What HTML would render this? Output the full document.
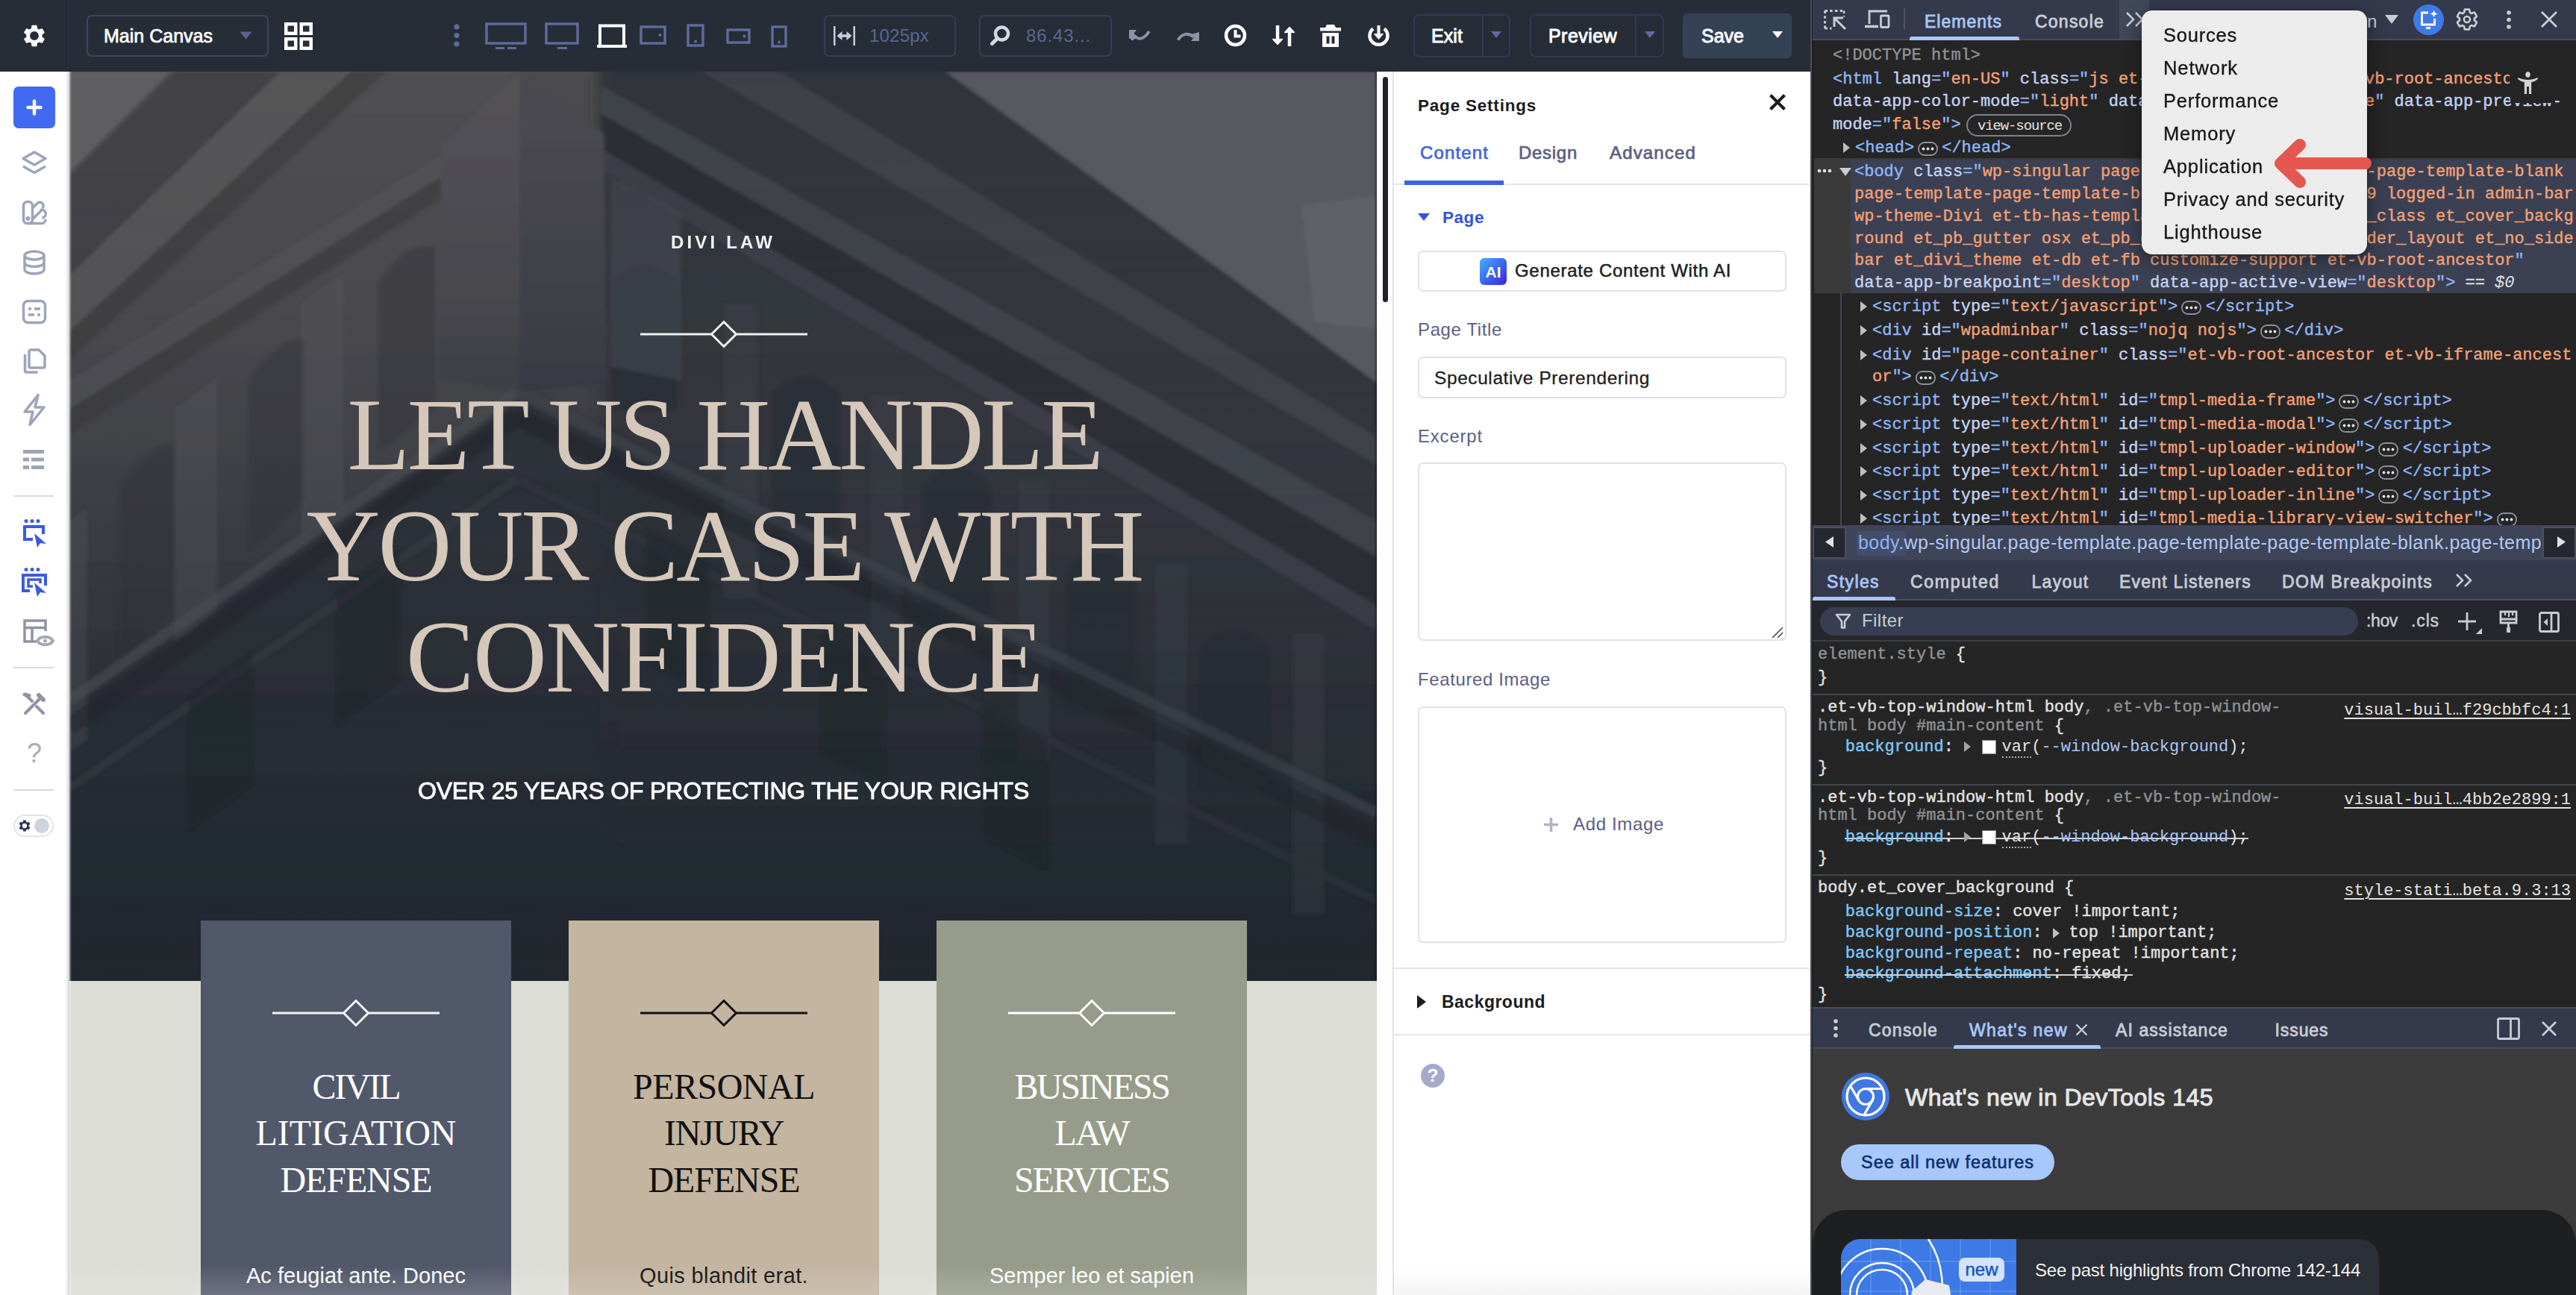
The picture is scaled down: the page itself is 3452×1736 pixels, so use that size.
<!DOCTYPE html><html lang="en"><head><meta charset="utf-8"><title>Divi Page Settings</title><style>html,body{margin:0;padding:0}body{width:3452px;height:1736px;position:relative;overflow:hidden;background:#fff}div,span,svg{position:absolute;box-sizing:border-box}.t{white-space:pre;display:block}span span{position:static}svg *{position:static}</style></head><body>
<div style="left:93px;top:96px;width:1752px;height:1640px;background:#dcddd5;"></div>
<svg style="left:93px;top:96px" width="1752" height="1219" viewBox="0 0 1860 1294" preserveAspectRatio="none">
<defs>
<linearGradient id="hg" x1="0" y1="0" x2="0" y2="1"><stop offset="0" stop-color="#4b4b4e"/><stop offset="0.250" stop-color="#46464a"/><stop offset="0.460" stop-color="#3a3b42"/><stop offset="0.700" stop-color="#2a2e37"/><stop offset="0.850" stop-color="#232a32"/><stop offset="1" stop-color="#1f262e"/></linearGradient>
<linearGradient id="fadeR" x1="0" y1="0" x2="0" y2="1"><stop offset="0" stop-color="#2c2f37" stop-opacity="0.900"/><stop offset="0.550" stop-color="#2b2e37" stop-opacity="0.550"/><stop offset="1" stop-color="#242a33" stop-opacity="0"/></linearGradient>
<linearGradient id="fadeL" x1="0" y1="0" x2="0" y2="1"><stop offset="0" stop-color="#58585a" stop-opacity="0.350"/><stop offset="0.600" stop-color="#505054" stop-opacity="0.220"/><stop offset="1" stop-color="#404048" stop-opacity="0"/></linearGradient>
<linearGradient id="pil" x1="0" y1="0" x2="0" y2="1"><stop offset="0" stop-color="#545357"/><stop offset="0.700" stop-color="#48484e"/><stop offset="1" stop-color="#3d3e46"/></linearGradient>
<linearGradient id="pil2" x1="0" y1="0" x2="0" y2="1"><stop offset="0" stop-color="#4b4b51"/><stop offset="0.700" stop-color="#404149"/><stop offset="1" stop-color="#373943"/></linearGradient>
<linearGradient id="low" x1="0" y1="0" x2="0" y2="1"><stop offset="0" stop-color="#2a2f37" stop-opacity="0.900"/><stop offset="1" stop-color="#20272f" stop-opacity="0"/></linearGradient>
<filter id="bl" x="-5%" y="-5%" width="110%" height="110%"><feGaussianBlur stdDeviation="2.500"/></filter>
<filter id="bl2" x="-5%" y="-5%" width="110%" height="110%"><feGaussianBlur stdDeviation="10"/></filter>
</defs>
<rect width="1860" height="1294" fill="url(#hg)"/>
<g filter="url(#bl2)">
<polygon points="-100,-100 640,-100 640,460 -100,970" fill="url(#fadeL)"/>
<polygon points="755,-100 1960,-100 1960,1100 755,1100" fill="url(#fadeR)"/>
<polygon points="-100,970 640,460 1960,1110 1960,1450 -100,1450" fill="url(#low)"/>
</g>
<g filter="url(#bl)">
<polygon points="0,0 143,0 0,143" fill="#5e5e62"/>
<polygon points="1246,0 1860,0 1860,443" fill="#585961"/>
<polygon points="1753,190 1860,177 1860,366 1772,356" fill="#616168"/>
<!-- left cornice bands -->
<polygon points="0,150 150,0 300,0 0,290" fill="#38383c" opacity="0.450"/>
<polygon points="0,290 300,0 400,0 0,370" fill="#5e5e60" opacity="0.400"/>
<polygon points="0,370 400,0 450,0 0,410" fill="#333337" opacity="0.450"/>
<polygon points="0,440 528,120 528,150 0,480" fill="#5a5a5d" opacity="0.400"/>
<polygon points="0,480 528,150 528,180 0,515" fill="#303034" opacity="0.450"/>
<!-- left arcade windows -->
<g fill="#303035" opacity="0.400">
<path d="M440,300 q40,-60 80,-50 v230 l-80,60z"/><path d="M255,440 q40,-60 80,-60 v230 l-80,70z"/><path d="M70,590 q40,-60 80,-60 v230 l-80,70z"/>
</g>
<g fill="#5c5c60" opacity="0.300">
<path d="M330,330 l60,-45 v330 l-60,45z"/><path d="M150,480 l60,-45 v330 l-60,45z"/><path d="M0,640 l25,-20 v330 l-25,20z"/>
</g>
<!-- right cornice -->
<polygon points="757,0 1246,0 1860,443 1860,640 757,20" fill="#30323b" opacity="0.450"/>
<polygon points="900,0 1010,0 1860,520 1860,560" fill="#5a5b63" opacity="0.350"/>
<polygon points="757,20 1860,640 1860,690 757,60" fill="#4c4e57" opacity="0.550"/>
<polygon points="757,60 1860,690 1860,760 757,110" fill="#262932" opacity="0.550"/>
<polygon points="757,110 1860,760 1860,795 757,140" fill="#454751" opacity="0.500"/>
<!-- right arcade windows -->
<g fill="#252831" opacity="0.500">
<path d="M770,300 q45,-50 95,0 v180 h-95z"/><path d="M1000,460 q45,-50 95,0 v200 h-95z"/><path d="M1215,590 q45,-50 95,0 v200 h-95z"/><path d="M1420,710 q45,-50 95,0 v200 h-95z"/><path d="M1610,820 q45,-50 95,0 v200 h-95z"/>
</g>
<g fill="#474952" opacity="0.220">
<rect x="930" y="330" width="50" height="420"/><rect x="1140" y="460" width="45" height="400"/><rect x="1350" y="580" width="45" height="400"/><rect x="1545" y="700" width="45" height="400"/><rect x="1740" y="800" width="45" height="400"/>
</g>
<polygon points="770,150 870,200 870,440 770,420" fill="#4a4f5a" opacity="0.450"/>
<!-- pillar -->
<polygon points="530,105 640,2 640,456 524,436" fill="url(#pil)"/>
<polygon points="640,2 760,88 764,444 640,456" fill="url(#pil2)"/>
<!-- chevron ledges -->
<g fill="none">
<path d="M636,456 L0,895" stroke="#4d4e54" stroke-width="16" opacity="0.600"/>
<path d="M636,456 L1860,1055" stroke="#40434c" stroke-width="16" opacity="0.600"/>
<path d="M636,490 L0,932" stroke="#24262d" stroke-width="26" opacity="0.500"/>
<path d="M636,490 L1860,1092" stroke="#20232b" stroke-width="26" opacity="0.500"/>
<path d="M636,580 L0,1020" stroke="#3c3e46" stroke-width="12" opacity="0.450"/>
<path d="M636,580 L1860,1180" stroke="#343741" stroke-width="12" opacity="0.450"/>
</g>
<g fill="#1f222a" opacity="0.400">
<path d="M380,740 l90,-65 v190 l-90,65z"/><path d="M170,890 l90,-65 v190 l-90,65z"/><path d="M820,650 l90,45 v190 l-90,-45z"/><path d="M1070,780 l90,45 v190 l-90,-45z"/><path d="M1300,900 l90,45 v190 l-90,-45z"/>
</g>
</g>
</svg>
<div style="left:93px;top:96px;width:3px;height:1640px;background:linear-gradient(90deg,rgba(255,255,255,.55),rgba(255,255,255,0))"></div>
<span id="t1" class="t" style="top:311.3px;font:700 24px/28.8px 'Liberation Sans',sans-serif;color:#f2f2f2;letter-spacing:4.17px;left:969px;transform:translateX(-50%);">DIVI LAW</span>
<svg style="left:856.5px;top:428.5px" width="226" height="38" viewBox="-113 -19 226 38" fill="none" stroke="#f0f0f0" stroke-width="3"><path d="M-112 0H-17M17 0H112"/><path d="M0 -16.500L16.500 0 0 16.500-16.500 0z"/></svg>
<span id="t2" class="t" style="top:500.6px;font:400 137px/164.4px 'Liberation Serif',serif;color:#d5c7b9;letter-spacing:-3.49px;left:970.5px;transform:translateX(-50%);">LET US HANDLE</span>
<span id="t3" class="t" style="top:649.6px;font:400 137px/164.4px 'Liberation Serif',serif;color:#d5c7b9;letter-spacing:-3.00px;left:970.5px;transform:translateX(-50%);">YOUR CASE WITH</span>
<span id="t4" class="t" style="top:798.6px;font:400 137px/164.4px 'Liberation Serif',serif;color:#d5c7b9;letter-spacing:-1.47px;left:970.5px;transform:translateX(-50%);">CONFIDENCE</span>
<span id="t5" class="t" style="top:1041.2px;font:400 32px/38.4px 'Liberation Sans',sans-serif;color:#fff;letter-spacing:-0.18px;left:969.5px;transform:translateX(-50%);-webkit-text-stroke:0.900px #fff;">OVER 25 YEARS OF PROTECTING THE YOUR RIGHTS</span>
<div style="left:269px;top:1234px;width:416px;height:502px;background:#51586a;"></div>
<svg style="left:364px;top:1338.5px" width="226" height="38" viewBox="-113 -19 226 38" fill="none" stroke="#f4f4f4" stroke-width="3"><path d="M-112 0H-17M17 0H112"/><path d="M0 -16.500L16.500 0 0 16.500-16.500 0z"/></svg>
<span id="t6" class="t" style="top:1427.5px;font:400 48px/57.6px 'Liberation Serif',serif;color:#fff;letter-spacing:-2.20px;left:477px;transform:translateX(-50%);">CIVIL</span>
<span id="t7" class="t" style="top:1490.0px;font:400 48px/57.6px 'Liberation Serif',serif;color:#fff;letter-spacing:-0.03px;left:477px;transform:translateX(-50%);">LITIGATION</span>
<span id="t8" class="t" style="top:1552.5px;font:400 48px/57.6px 'Liberation Serif',serif;color:#fff;letter-spacing:-1.10px;left:477px;transform:translateX(-50%);">DEFENSE</span>
<span id="t9" class="t" style="top:1693.1px;font:400 29px/34.8px 'Liberation Sans',sans-serif;color:#fff;letter-spacing:0.03px;left:477px;transform:translateX(-50%);">Ac feugiat ante. Donec</span>
<div style="left:762px;top:1234px;width:416px;height:502px;background:#c3b5a0;"></div>
<svg style="left:857px;top:1338.5px" width="226" height="38" viewBox="-113 -19 226 38" fill="none" stroke="#111" stroke-width="3"><path d="M-112 0H-17M17 0H112"/><path d="M0 -16.500L16.500 0 0 16.500-16.500 0z"/></svg>
<span id="t10" class="t" style="top:1427.5px;font:400 48px/57.6px 'Liberation Serif',serif;color:#111;letter-spacing:-0.51px;left:970px;transform:translateX(-50%);">PERSONAL</span>
<span id="t11" class="t" style="top:1490.0px;font:400 48px/57.6px 'Liberation Serif',serif;color:#111;letter-spacing:-1.34px;left:970px;transform:translateX(-50%);">INJURY</span>
<span id="t12" class="t" style="top:1552.5px;font:400 48px/57.6px 'Liberation Serif',serif;color:#111;letter-spacing:-1.10px;left:970px;transform:translateX(-50%);">DEFENSE</span>
<span id="t13" class="t" style="top:1693.1px;font:400 29px/34.8px 'Liberation Sans',sans-serif;color:#111;letter-spacing:0.38px;left:970px;transform:translateX(-50%);">Quis blandit erat.</span>
<div style="left:1255px;top:1234px;width:416px;height:502px;background:#979c8a;"></div>
<svg style="left:1350px;top:1338.5px" width="226" height="38" viewBox="-113 -19 226 38" fill="none" stroke="#fff" stroke-width="3"><path d="M-112 0H-17M17 0H112"/><path d="M0 -16.500L16.500 0 0 16.500-16.500 0z"/></svg>
<span id="t14" class="t" style="top:1427.5px;font:400 48px/57.6px 'Liberation Serif',serif;color:#fff;letter-spacing:-2.47px;left:1463px;transform:translateX(-50%);">BUSINESS</span>
<span id="t15" class="t" style="top:1490.0px;font:400 48px/57.6px 'Liberation Serif',serif;color:#fff;letter-spacing:-2.15px;left:1463px;transform:translateX(-50%);">LAW</span>
<span id="t16" class="t" style="top:1552.5px;font:400 48px/57.6px 'Liberation Serif',serif;color:#fff;letter-spacing:-1.86px;left:1463px;transform:translateX(-50%);">SERVICES</span>
<span id="t17" class="t" style="top:1693.1px;font:400 29px/34.8px 'Liberation Sans',sans-serif;color:#fff;left:1463px;transform:translateX(-50%);">Semper leo et sapien</span>
<div style="left:93px;top:1696px;width:1752px;height:40px;background:linear-gradient(180deg,rgba(255,255,255,0),rgba(255,255,255,.16))"></div>
<div style="left:1841px;top:96px;width:4px;height:1218px;background:linear-gradient(90deg,rgba(0,0,0,0),rgba(0,0,0,.3))"></div>
<div style="left:0px;top:0px;width:2427px;height:96px;background:#262d37;"></div>
<div style="left:89px;top:0px;width:4px;height:96px;background:linear-gradient(90deg,#1b2330,#2a3446 50%,#1f2835)"></div>
<svg style="left:29px;top:31px" width="34" height="34" viewBox="0 0 24 24"><path fill="#fff" fill-rule="evenodd" d="M19.4 13c.04-.33.07-.66.07-1s-.03-.67-.07-1l2.1-1.650c.19-.15.24-.42.12-.64l-2-3.460c-.12-.22-.39-.3-.61-.22l-2.490 1c-.52-.4-1.080-.73-1.690-.98l-.38-2.650A.49.49 0 0 0 13.960 2h-4c-.25 0-.46.18-.49.42l-.38 2.650c-.61.25-1.170.59-1.690.98l-2.490-1c-.23-.09-.49 0-.61.22l-2 3.460c-.13.22-.07.49.12.64L4.530 11c-.04.33-.07.660-.07 1s.03.670.07 1l-2.110 1.650c-.19.15-.24.42-.12.64l2 3.460c.12.22.39.3.61.22l2.490-1c.52.4 1.080.73 1.690.98l.38 2.650c.03.24.24.42.49.42h4c.25 0 .46-.18.49-.42l.38-2.650c.61-.25 1.170-.59 1.690-.98l2.490 1c.23.09.49 0 .61-.22l2-3.460c.12-.22.07-.49-.12-.64L19.400 13zM11.960 16.200a4.200 4.200 0 1 1 0-8.400 4.200 4.200 0 0 1 0 8.400z"/></svg>
<div style="left:116px;top:20px;width:244px;height:56px;border:2px solid #3b4661;border-radius:7px"></div>
<span id="t18" class="t" style="top:32.8px;font:400 25px/30.0px 'Liberation Sans',sans-serif;color:#fff;letter-spacing:0.01px;left:139px;-webkit-text-stroke:0.700px #fff;">Main Canvas</span>
<svg style="left:321px;top:42px" width="17" height="11" viewBox="0 0 17 11"><path d="M0.500 0.500h16l-8 10z" fill="#5a6494"/></svg>
<svg style="left:381px;top:30px" width="38" height="37" viewBox="0 0 38 37" fill="none" stroke="#fff" stroke-width="4.500"><rect x="2.250" y="2.250" width="13" height="12.500"/><rect x="22.750" y="2.250" width="13" height="12.500"/><rect x="2.250" y="22.250" width="13" height="12.500"/><rect x="22.750" y="22.250" width="13" height="12.500"/></svg>
<svg style="left:607px;top:31px" width="10" height="34" viewBox="0 0 10 34" fill="#5f6b9c"><circle cx="5" cy="5" r="3.600"/><circle cx="5" cy="16.500" r="3.600"/><circle cx="5" cy="28" r="3.600"/></svg>
<svg style="left:648px;top:28px" width="60" height="40" viewBox="0 0 60 40" fill="none" stroke="#5f6b9c" stroke-width="3.400"><rect x="4" y="4" width="52" height="26"/><path d="M16 36.500h12M32 36.500h12" stroke-width="3"/></svg>
<svg style="left:728px;top:28px" width="50" height="40" viewBox="0 0 50 40" fill="none" stroke="#5f6b9c" stroke-width="3.400"><rect x="4" y="4" width="42" height="26"/><path d="M19 36.500h13" stroke-width="3"/></svg>
<svg style="left:798px;top:30px" width="44" height="36" viewBox="0 0 44 36" fill="none" stroke="#fff" stroke-width="4"><path d="M6 30V4.500h32V30"/><path d="M2 32h40" stroke-width="4"/></svg>
<svg style="left:856px;top:33px" width="38" height="28" viewBox="0 0 38 28" fill="none" stroke="#5f6b9c" stroke-width="3.400"><rect x="3" y="3" width="32" height="22"/><circle cx="28.500" cy="14" r="2" fill="#5f6b9c" stroke="none"/></svg>
<svg style="left:919px;top:31px" width="26" height="33" viewBox="0 0 26 33" fill="none" stroke="#5f6b9c" stroke-width="3.400"><rect x="3" y="3" width="20" height="27"/><circle cx="13" cy="24.500" r="2" fill="#5f6b9c" stroke="none"/></svg>
<svg style="left:972px;top:37px" width="35" height="23" viewBox="0 0 35 23" fill="none" stroke="#5f6b9c" stroke-width="3.400"><rect x="3" y="3" width="29" height="17"/><circle cx="25.500" cy="11.500" r="2" fill="#5f6b9c" stroke="none"/></svg>
<svg style="left:1032px;top:33px" width="24" height="32" viewBox="0 0 24 32" fill="none" stroke="#5f6b9c" stroke-width="3.400"><rect x="3" y="3" width="18" height="26"/><circle cx="12" cy="23.500" r="2" fill="#5f6b9c" stroke="none"/></svg>
<div style="left:1104px;top:20px;width:177px;height:56px;border:2px solid #333e58;border-radius:7px"></div>
<svg style="left:1117px;top:35px" width="29" height="26" viewBox="0 0 29 26" fill="#c9cde0"><rect x="0" y="0" width="2.500" height="26"/><rect x="26.500" y="0" width="2.500" height="26"/><path d="M4.500 13l7-6v4.300h6V7l7 6-7 6v-4.300h-6V19z"/></svg>
<span id="t19" class="t" style="top:33.8px;font:400 24px/28.8px 'Liberation Sans',sans-serif;color:#5b6691;letter-spacing:0.21px;left:1165px;">1025px</span>
<div style="left:1312px;top:20px;width:178px;height:56px;border:2px solid #333e58;border-radius:7px"></div>
<svg style="left:1327px;top:34px" width="27" height="27" viewBox="0 0 27 27" fill="none" stroke="#d5d8e6"><circle cx="15.500" cy="11" r="8.500" stroke-width="4.500"/><path d="M9.500 17.500L2.500 24.500" stroke-width="5" stroke-linecap="round"/></svg>
<span id="t20" class="t" style="top:33.8px;font:400 24px/28.8px 'Liberation Sans',sans-serif;color:#5b6691;letter-spacing:0.87px;left:1375px;">86.43...</span>
<svg style="left:1513px;top:39px" width="30" height="18" viewBox="0 0 30 18" fill="none" stroke="#8b93a8" stroke-width="4"><path d="M6 9c7 6 14 5 21-6"/><path d="M0 1h10l-3.500 5 5 4-7 5.500L0 12z" fill="#8b93a8" stroke="none"/></svg>
<svg style="left:1576px;top:39px" width="31" height="18" viewBox="0 0 31 18" fill="none" stroke="#8b93a8" stroke-width="4"><path d="M2.500 14.500c6-9 14-10 21-4"/><path d="M31 4v12H20l4-5.500-4-3.500z" fill="#8b93a8" stroke="none"/></svg>
<svg style="left:1640px;top:32px" width="31" height="31" viewBox="0 0 31 31" fill="none" stroke="#fff" stroke-width="4.500"><circle cx="15.500" cy="15.500" r="12.500"/><path d="M15.500 8v8.500h7" stroke-width="4"/></svg>
<svg style="left:1704px;top:33px" width="32" height="30" viewBox="0 0 32 30" fill="none" stroke="#fff" stroke-width="4.500"><path d="M8 1v24"/><path d="M1.500 19l6.500 7 6.500-7" fill="#fff" stroke-width="2"/><path d="M24 29V5"/><path d="M17.500 11L24 4l6.500 7" fill="#fff" stroke-width="2"/></svg>
<svg style="left:1769px;top:33px" width="28" height="30" viewBox="0 0 28 30" fill="#fff"><path d="M9 0h10l2 4h7v4.500H0V4h7z"/><path fill-rule="evenodd" d="M3 11h22v19H3zM8.500 15.500v10h4v-10zM15.500 15.500v10h4v-10z"/></svg>
<svg style="left:1832px;top:33px" width="31" height="30" viewBox="0 0 31 30" fill="none" stroke="#fff" stroke-width="4.500"><path d="M8 5.500a12 12 0 1 0 15 0" /><path d="M15.500 1v16" stroke-width="4"/><path d="M9.500 12.500l6 7 6-7z" fill="#fff" stroke-width="1"/></svg>
<div style="left:1894px;top:19px;width:130px;height:58px;border:2px solid #2f3a55;border-radius:8px"></div>
<div style="left:1986px;top:21px;width:2px;height:54px;background:#2f3a55;"></div>
<span id="t21" class="t" style="top:32.8px;font:400 25px/30.0px 'Liberation Sans',sans-serif;color:#fff;letter-spacing:0.08px;left:1918px;-webkit-text-stroke:0.900px #fff;">Exit</span>
<svg style="left:1998px;top:42px" width="14" height="10" viewBox="0 0 14 10"><path d="M0 0h14l-7 9z" fill="#5f6b9c"/></svg>
<div style="left:2050px;top:19px;width:180px;height:58px;border:2px solid #2f3a55;border-radius:8px"></div>
<div style="left:2191px;top:21px;width:2px;height:54px;background:#2f3a55;"></div>
<span id="t22" class="t" style="top:32.8px;font:400 25px/30.0px 'Liberation Sans',sans-serif;color:#fff;letter-spacing:0.44px;left:2075px;-webkit-text-stroke:0.900px #fff;">Preview</span>
<svg style="left:2204px;top:42px" width="14" height="10" viewBox="0 0 14 10"><path d="M0 0h14l-7 9z" fill="#5f6b9c"/></svg>
<div style="left:2255px;top:18px;width:146px;height:60px;background:#344256;border-radius:6px"></div>
<span id="t23" class="t" style="top:32.8px;font:400 25px/30.0px 'Liberation Sans',sans-serif;color:#fff;left:2280px;-webkit-text-stroke:0.900px #fff;">Save</span>
<svg style="left:2375px;top:42px" width="14" height="10" viewBox="0 0 14 10"><path d="M0 0h14l-7 9z" fill="#fff"/></svg>
<div style="left:0px;top:96px;width:93px;height:1640px;background:#fff;background:linear-gradient(90deg,#fff 0,#fff 87px,#eeeff2 90px,#cfd1d7 93px)"></div>
<div style="left:18px;top:116px;width:56px;height:56px;background:#4169f1;border-radius:7px"></div>
<svg style="left:35px;top:133px" width="22" height="22" viewBox="0 0 22 22" stroke="#fff" stroke-width="4.500" stroke-linecap="round"><path d="M11 2.500v17M2.500 11h17"/></svg>
<svg style="left:28px;top:201px" width="36" height="38" viewBox="0 0 36 38" fill="none" stroke="#9ea5ba" stroke-width="3.500" stroke-linejoin="round"><path d="M18 3l15 8.500-15 8.500-15-8.500z"/><path d="M3 22l15 8.500 15-8.500"/></svg>
<svg style="left:28px;top:267px" width="36" height="36" viewBox="0 0 36 36" fill="none" stroke="#9ea5ba" stroke-width="3.500" stroke-linejoin="round"><rect x="3.500" y="3.500" width="12" height="29" rx="5"/><circle cx="9.500" cy="26" r="1.300" fill="#9ea5ba"/><path d="M15.500 12l6.500-6.500c2-2 4.500-2 6.500 0s2 4.500 0 6.500"/><path d="M26 14.500c3-1 6 .5 7 3.500s-.5 6-3.500 7l-1 .300"/><path d="M9.500 32.500h18c3 0 5.500-2 5.500-5.500"/><path d="M15.500 27l13-13"/></svg>
<svg style="left:30px;top:335px" width="32" height="34" viewBox="0 0 32 34" fill="none" stroke="#9ea5ba" stroke-width="3.500"><ellipse cx="16" cy="7.500" rx="13" ry="5.500"/><path d="M3 7.500v19c0 3 5.800 5.500 13 5.500s13-2.500 13-5.500v-19"/><path d="M3 17c0 3 5.800 5.500 13 5.500s13-2.500 13-5.500"/></svg>
<svg style="left:29px;top:401px" width="34" height="34" viewBox="0 0 34 34" fill="none" stroke="#9ea5ba" stroke-width="3.500"><rect x="2.500" y="2.500" width="29" height="29" rx="6"/><path d="M9 13h4M17 13h8M9 21h8M21 21h4" stroke-width="3.500"/></svg>
<svg style="left:30px;top:466px" width="32" height="36" viewBox="0 0 32 36" fill="none" stroke="#9ea5ba" stroke-width="3.500" stroke-linejoin="round"><path d="M11 3h11l8 8v14a2 2 0 0 1-2 2H11a2 2 0 0 1-2-2V5a2 2 0 0 1 2-2z"/><path d="M3.500 9v22a2 2 0 0 0 2 2h15"/></svg>
<svg style="left:30px;top:527px" width="32" height="45" viewBox="0 0 32 45" fill="none" stroke="#9ea5ba" stroke-width="3.500" stroke-linejoin="round"><path d="M21 2.500L3 25h11l-4 17.500L29 19H17z"/></svg>
<svg style="left:31px;top:601px" width="30" height="30" viewBox="0 0 30 30" fill="#9ea5ba"><rect x="0" y="2" width="28" height="5"/><rect x="0" y="12.500" width="8" height="5"/><rect x="11" y="12.500" width="17" height="5"/><rect x="0" y="23" width="8" height="5"/><rect x="11" y="23" width="17" height="5"/></svg>
<div style="left:18px;top:664px;width:54px;height:2px;background:#d9dbe3;"></div>
<svg style="left:30px;top:695px" width="34" height="42" viewBox="0 0 34 42" fill="none" stroke="#3b5bdb" stroke-width="4"><circle cx="5" cy="3.500" r="2.500" fill="#3b5bdb" stroke="none"/><circle cx="13" cy="3.500" r="2.500" fill="#3b5bdb" stroke="none"/><circle cx="21" cy="3.500" r="2.500" fill="#3b5bdb" stroke="none"/><path d="M14 28H3V11h25v10"/><path d="M16 20l4 19 4-6 8 1z" fill="#3b5bdb" stroke="none"/></svg>
<svg style="left:28px;top:760px" width="36" height="43" viewBox="0 0 36 43" fill="none" stroke="#3b5bdb" stroke-width="4"><circle cx="7" cy="3.500" r="2.500" fill="#3b5bdb" stroke="none"/><circle cx="15" cy="3.500" r="2.500" fill="#3b5bdb" stroke="none"/><circle cx="23" cy="3.500" r="2.500" fill="#3b5bdb" stroke="none"/><path d="M12 32H3V11h30v14"/><path d="M16 26h-6V17h16v5" stroke-width="3.500"/><path d="M18 21l4 19 4-6 8 1z" fill="#3b5bdb" stroke="none"/></svg>
<svg style="left:31px;top:830px" width="42" height="42" viewBox="0 0 42 42" fill="none" stroke="#8f93a3" stroke-width="3.500"><path d="M18 30H2V2h28v14"/><path d="M2 11.500h28M12 11.500V30"/><path d="M19 29c4-7 17-7 21 0-4 7-17 7-21 0z" fill="#fff" stroke="#a6a9b5" stroke-width="4"/><circle cx="29.500" cy="29" r="2.500" fill="#a6a9b5" stroke="none"/></svg>
<div style="left:18px;top:894px;width:54px;height:2px;background:#d9dbe3;"></div>
<svg style="left:30px;top:928px" width="32" height="32" viewBox="0 0 32 32" fill="none" stroke="#8f93a3" stroke-width="4" stroke-linecap="round"><path d="M4 28L24 8"/><path d="M22 4l6 6" stroke-width="6"/><path d="M5 4l8 8M19 19l9 9" /><path d="M3 3l6 1.500" stroke-width="5"/></svg>
<span id="t24" class="t" style="top:987.9px;font:400 36px/43.2px 'Liberation Sans',sans-serif;color:#a9adba;left:46px;transform:translateX(-50%);">?</span>
<div style="left:18px;top:1058px;width:54px;height:2px;background:#d9dbe3;"></div>
<div style="left:18px;top:1092px;width:54px;height:30px;background:#fff;border:2px solid #e1e3ea;border-radius:15px"></div>
<svg style="left:24px;top:1098px" width="18" height="18" viewBox="0 0 24 24"><path fill="#2b3550" fill-rule="evenodd" d="M19.4 13c.04-.33.07-.66.07-1s-.03-.67-.07-1l2.100-1.650c.19-.15.24-.42.12-.64l-2-3.460c-.12-.22-.39-.3-.61-.22l-2.490 1c-.52-.4-1.080-.73-1.690-.98l-.38-2.650A.49.49 0 0 0 13.960 2h-4c-.25 0-.46.18-.49.42l-.38 2.650c-.61.25-1.170.59-1.690.98l-2.490-1c-.23-.09-.49 0-.61.22l-2 3.460c-.13.22-.07.49.12.64L4.530 11c-.04.33-.07.660-.07 1s.03.670.07 1l-2.110 1.650c-.19.15-.24.42-.12.64l2 3.460c.12.22.39.3.61.22l2.490-1c.52.4 1.080.73 1.690.98l.38 2.650c.03.24.24.42.49.42h4c.25 0 .46-.18.49-.42l.38-2.650c.61-.25 1.170-.59 1.690-.98l2.490 1c.23.09.49 0 .61-.22l2-3.460c.12-.22.07-.49-.12-.64L19.400 13zM11.960 16.200a4.200 4.200 0 1 1 0-8.400 4.200 4.200 0 0 1 0 8.400z"/></svg>
<div style="left:46px;top:1097px;width:20px;height:20px;background:#cfd3df;border-radius:10px"></div>
<div style="left:1845px;top:96px;width:582px;height:1640px;background:#fff;"></div>
<div style="left:1845px;top:96px;width:23px;height:1640px;background:#fdfdfd;"></div>
<div style="left:1853px;top:103px;width:7px;height:302px;background:#202125;border-radius:3.500px"></div>
<div style="left:1866px;top:96px;width:2px;height:1640px;background:#e3e4e8;"></div>
<span id="t25" class="t" style="top:128.2px;font:700 22.5px/27.0px 'Liberation Sans',sans-serif;color:#1b1c1f;letter-spacing:0.79px;left:1900px;">Page Settings</span>
<svg style="left:2370px;top:125px" width="24" height="24" viewBox="0 0 24 24" stroke="#1a1b1e" stroke-width="4" stroke-linecap="butt"><path d="M2.500 2.500l19 19M21.500 2.500l-19 19"/></svg>
<span id="t26" class="t" style="top:191.3px;font:400 24px/28.8px 'Liberation Sans',sans-serif;color:#4363df;letter-spacing:1.13px;left:1903px;-webkit-text-stroke:0.700px #4363df;">Content</span>
<span id="t27" class="t" style="top:191.3px;font:400 24px/28.8px 'Liberation Sans',sans-serif;color:#5b6083;letter-spacing:0.71px;left:2035px;-webkit-text-stroke:0.700px #5b6083;">Design</span>
<span id="t28" class="t" style="top:191.3px;font:400 24px/28.8px 'Liberation Sans',sans-serif;color:#5b6083;letter-spacing:1.16px;left:2157px;-webkit-text-stroke:0.700px #5b6083;">Advanced</span>
<div style="left:1868px;top:246px;width:559px;height:2px;background:#e4e6ec;"></div>
<div style="left:1882px;top:242px;width:133px;height:6px;background:#3f60e6;"></div>
<svg style="left:1900px;top:286px" width="16" height="10" viewBox="0 0 16 10"><path d="M0 0h16l-8 10z" fill="#3353dc"/></svg>
<span id="t29" class="t" style="top:278.2px;font:700 22.5px/27.0px 'Liberation Sans',sans-serif;color:#3353dc;letter-spacing:0.55px;left:1933px;">Page</span>
<div style="left:1900px;top:336px;width:494px;height:55px;background:#fff;border:2px solid #e0e2e9;border-radius:7px"></div>
<svg style="left:1983px;top:346px" width="36" height="36" viewBox="0 0 36 36"><defs><linearGradient id="aig" x1="0" y1="0" x2="1" y2="1"><stop offset="0" stop-color="#43b4f7"/><stop offset="0.550" stop-color="#3a63f0"/><stop offset="1" stop-color="#3a22dc"/></linearGradient></defs><rect width="36" height="36" rx="6" fill="url(#aig)"/><text x="18" y="26" font-family="Liberation Sans, sans-serif" font-weight="700" font-size="21" fill="#fff" text-anchor="middle">AI</text></svg>
<span id="t30" class="t" style="top:349.3px;font:400 24px/28.8px 'Liberation Sans',sans-serif;color:#1d1e21;letter-spacing:0.69px;left:2030px;-webkit-text-stroke:0.5px #1d1e21;">Generate Content With AI</span>
<span id="t31" class="t" style="top:427.8px;font:400 24px/28.8px 'Liberation Sans',sans-serif;color:#5b6083;letter-spacing:0.63px;left:1900px;">Page Title</span>
<div style="left:1900px;top:478px;width:494px;height:56px;background:#fff;border:2px solid #e0e2e9;border-radius:7px"></div>
<span id="t32" class="t" style="top:491.8px;font:400 24.5px/29.4px 'Liberation Sans',sans-serif;color:#1d1e21;letter-spacing:0.58px;left:1922px;-webkit-text-stroke:0.3px #1d1e21;">Speculative Prerendering</span>
<span id="t33" class="t" style="top:570.8px;font:400 24px/28.8px 'Liberation Sans',sans-serif;color:#5b6083;letter-spacing:0.80px;left:1900px;">Excerpt</span>
<div style="left:1900px;top:620px;width:494px;height:239px;background:#fff;border:2px solid #e0e2e9;border-radius:7px"></div>
<svg style="left:2374px;top:840px" width="16" height="16" viewBox="0 0 16 16" stroke="#444" stroke-width="1.500"><path d="M1 15L15 1M8 15l7-7"/></svg>
<span id="t34" class="t" style="top:896.8px;font:400 24px/28.8px 'Liberation Sans',sans-serif;color:#5b6083;letter-spacing:0.61px;left:1900px;">Featured Image</span>
<div style="left:1900px;top:947px;width:494px;height:317px;background:#fff;border:2px solid #e0e2e9;border-radius:7px"></div>
<svg style="left:2069px;top:1096px" width="19" height="19" viewBox="0 0 19 19" stroke="#b0b3c8" stroke-width="3.600"><path d="M9.500 0v19M0 9.500h19"/></svg>
<span id="t35" class="t" style="top:1091.3px;font:400 24px/28.8px 'Liberation Sans',sans-serif;color:#5b6083;letter-spacing:0.66px;left:2108px;">Add Image</span>
<div style="left:1868px;top:1297px;width:559px;height:2px;background:#e4e6ec;"></div>
<svg style="left:1899px;top:1334px" width="12" height="18" viewBox="0 0 12 18"><path d="M0 0v18l12-9z" fill="#1b1c1f"/></svg>
<span id="t36" class="t" style="top:1330.2px;font:700 23px/27.6px 'Liberation Sans',sans-serif;color:#1b1c1f;letter-spacing:0.48px;left:1932px;">Background</span>
<div style="left:1868px;top:1386px;width:559px;height:2px;background:#e4e6ec;"></div>
<div style="left:1904px;top:1426px;width:32px;height:32px;background:#a5aacd;border-radius:16px"></div>
<span id="t37" class="t" style="top:1428.3px;font:700 24px/28.8px 'Liberation Sans',sans-serif;color:#fff;left:1920px;transform:translateX(-50%);">?</span>
<div style="left:1868px;top:1700px;width:559px;height:36px;background:linear-gradient(180deg,rgba(244,244,244,0),rgba(244,244,244,1))"></div>
<div style="left:2427px;top:0px;width:1025px;height:1736px;background:#252525;"></div>
<div style="left:2426px;top:0px;width:2px;height:1736px;background:#4a4d54;"></div>
<div style="left:2428px;top:0px;width:3px;height:1736px;background:#1f2126;"></div>
<div style="left:2429px;top:0px;width:1023px;height:53px;background:#343a4c;"></div>
<div style="left:2429px;top:52px;width:1023px;height:2px;background:#474d5c;"></div>
<div style="left:2840px;top:0px;width:40px;height:52px;background:#414859;"></div>
<svg style="left:2444px;top:11px" width="32" height="30" viewBox="0 0 32 30" fill="none" stroke="#c9ccd3" stroke-width="2.800"><path d="M1.500 3.500h26M1.500 3.500v24" stroke-dasharray="3.500 3.200"/><path d="M27 3.500v8M1.500 27h9" stroke-dasharray="3.500 3.200"/><path d="M14 13l15 15M14 25V13h12" stroke-width="3"/></svg>
<svg style="left:2499px;top:13px" width="34" height="26" viewBox="0 0 34 26" fill="none" stroke="#c9ccd3" stroke-width="2.800"><path d="M6 19V2h24"/><path d="M0 22.500h18" stroke-width="3.500"/><rect x="21.500" y="8" width="10.500" height="15.500" rx="1"/></svg>
<div style="left:2551px;top:11px;width:2px;height:28px;background:#4b5262;"></div>
<span id="t38" class="t" style="top:15.7px;font:400 23px/27.6px 'Liberation Sans',sans-serif;color:#a8c7fa;letter-spacing:1.01px;left:2579px;-webkit-text-stroke:0.800px #a8c7fa;">Elements</span>
<div style="left:2559px;top:49px;width:147px;height:5px;background:#a8c7fa;border-radius:3px 3px 0 0"></div>
<span id="t39" class="t" style="top:15.7px;font:400 23px/27.6px 'Liberation Sans',sans-serif;color:#c9ccd3;letter-spacing:1.23px;left:2727px;-webkit-text-stroke:0.800px #c9ccd3;">Console</span>
<svg style="left:2848px;top:15px" width="26" height="22" viewBox="0 0 26 22" fill="none" stroke="#c9ccd3" stroke-width="2.600"><path d="M2 2l9 9-9 9M14 2l9 9-9 9"/></svg>
<span id="t40" class="t" style="top:14.8px;font:400 24px/28.8px 'Liberation Sans',sans-serif;color:#c9ccd3;left:3172px;">n</span>
<svg style="left:3196px;top:20px" width="18" height="12" viewBox="0 0 18 12"><path d="M0 0h18l-9 12z" fill="#c9ccd3"/></svg>
<div style="left:3234px;top:6px;width:41px;height:41px;background:#3f7ae8;border-radius:50%"></div>
<svg style="left:3241px;top:12px" width="28" height="28" viewBox="0 0 28 28" fill="none" stroke="#fff" stroke-width="2.800"><path d="M13 5H4.500v16h17V13"/><path d="M10 25.500h6" stroke-width="2.500"/><path d="M20.500 1.500l1.400 3.600 3.600 1.400-3.600 1.400-1.400 3.600-1.400-3.600-3.600-1.400 3.600-1.400z" fill="#fff" stroke="none"/></svg>
<svg style="left:3290px;top:10px" width="32" height="32" viewBox="0 0 24 24" fill="none" stroke="#c9ccd3" stroke-width="2"><path stroke-linejoin="round" d="M19.400 13c.04-.33.07-.66.07-1s-.03-.67-.07-1l2.100-1.650c.19-.15.24-.42.12-.64l-2-3.460c-.12-.22-.39-.3-.61-.22l-2.490 1c-.52-.4-1.080-.73-1.690-.98l-.38-2.650A.49.49 0 0 0 13.960 2h-4c-.25 0-.46.18-.49.42l-.38 2.650c-.61.25-1.170.59-1.690.98l-2.490-1c-.23-.09-.49 0-.61.22l-2 3.460c-.13.22-.07.49.12.64L4.530 11c-.04.33-.07.660-.07 1s.03.670.07 1l-2.110 1.650c-.19.15-.24.42-.12.64l2 3.460c.12.22.39.3.61.22l2.490-1c.52.4 1.080.73 1.690.98l.38 2.650c.03.24.24.42.49.42h4c.25 0 .46-.18.49-.42l.38-2.650c.61-.25 1.170-.59 1.690-.98l2.490 1c.23.09.49 0 .61-.22l2-3.460c.12-.22.07-.49-.12-.64L19.400 13z"/><circle cx="11.960" cy="12" r="3"/></svg>
<svg style="left:3357px;top:13px" width="10" height="28" viewBox="0 0 10 28" fill="#c9ccd3"><circle cx="5" cy="4" r="2.800"/><circle cx="5" cy="13.500" r="2.800"/><circle cx="5" cy="23" r="2.800"/></svg>
<svg style="left:3404px;top:14px" width="24" height="24" viewBox="0 0 24 24" stroke="#c9ccd3" stroke-width="2.800"><path d="M2 2l20 20M22 2L2 22"/></svg>
<div style="left:2431px;top:212px;width:1021px;height:181px;background:#3a3a3b;"></div>
<div style="left:2480px;top:214px;width:972px;height:179px;background:#3b4153;"></div>
<div style="left:2466px;top:393px;width:2px;height:312px;background:#44474f;"></div>
<span id="t41" class="t" style="top:62.2px;font:400 22px/26.4px 'Liberation Mono',monospace;color:#e3e3e3;left:2456px;-webkit-text-stroke-width:0.400px;"><span style="color:#8f9296">&lt;!DOCTYPE html&gt;</span></span>
<span id="t42" class="t" style="top:94.2px;font:400 22px/26.4px 'Liberation Mono',monospace;color:#e3e3e3;left:2456px;-webkit-text-stroke-width:0.400px;width:907px;overflow:hidden;"><span style="color:#8fb6f7">&lt;html </span><span style="color:#c6d3f2">lang</span><span style="color:#8fb6f7">="</span><span style="color:#f3a076">en-US</span><span style="color:#8fb6f7">" </span><span style="color:#c6d3f2">class</span><span style="color:#8fb6f7">="</span><span style="color:#f3a076">js et-vb-top-window-html et-vb-root-ancestor</span><span style="color:#8fb6f7">"</span></span>
<span id="t43" class="t" style="top:124.2px;font:400 22px/26.4px 'Liberation Mono',monospace;color:#e3e3e3;left:2456px;-webkit-text-stroke-width:0.400px;"><span style="color:#c6d3f2">data-app-color-mode</span><span style="color:#8fb6f7">="</span><span style="color:#f3a076">light</span><span style="color:#8fb6f7">" </span><span style="color:#c6d3f2">data-app-frame-mode</span><span style="color:#8fb6f7">="</span><span style="color:#f3a076">single</span><span style="color:#8fb6f7">" </span><span style="color:#c6d3f2">data-app-preview-</span></span>
<span id="t44" class="t" style="top:155.2px;font:400 22px/26.4px 'Liberation Mono',monospace;color:#e3e3e3;left:2456px;-webkit-text-stroke-width:0.400px;"><span style="color:#c6d3f2">mode</span><span style="color:#8fb6f7">="</span><span style="color:#f3a076">false</span><span style="color:#8fb6f7">"&gt;</span></span>
<div style="left:2635px;top:153px;width:141px;height:30px;border:2px solid #7d8290;border-radius:15px"></div>
<span id="t45" class="t" style="top:157.5px;font:400 19px/22.8px 'Liberation Mono',monospace;color:#e3e3e3;letter-spacing:-1.13px;left:2650px;">view-source</span>
<svg style="left:2470px;top:191px" width="9" height="14" viewBox="0 0 9 14"><path d="M0 0v14l9-7z" fill="#bdbfc4"/></svg>
<span id="t46" class="t" style="top:186.2px;font:400 22px/26.4px 'Liberation Mono',monospace;color:#e3e3e3;left:2486px;-webkit-text-stroke-width:0.400px;"><span style="color:#8fb6f7">&lt;head&gt;</span></span>
<svg style="left:2570.2px;top:190px" width="27" height="19" viewBox="0 0 27 19"><rect x="1" y="1" width="25" height="17" rx="8" fill="none" stroke="#8c919d" stroke-width="1.800"/><circle cx="7.500" cy="9.500" r="1.900" fill="#e3e3e3"/><circle cx="13.500" cy="9.500" r="1.900" fill="#e3e3e3"/><circle cx="19.500" cy="9.500" r="1.900" fill="#e3e3e3"/></svg>
<span id="t47" class="t" style="top:186.2px;font:400 22px/26.4px 'Liberation Mono',monospace;color:#e3e3e3;left:2602.2px;-webkit-text-stroke-width:0.400px;"><span style="color:#8fb6f7">&lt;/head&gt;</span></span>
<svg style="left:2435px;top:226px" width="20" height="6" viewBox="0 0 20 6" fill="#e3e3e3"><circle cx="3" cy="3" r="2.300"/><circle cx="10" cy="3" r="2.300"/><circle cx="17" cy="3" r="2.300"/></svg>
<svg style="left:2465px;top:225px" width="16" height="11" viewBox="0 0 16 11"><path d="M0 0h16l-8 11z" fill="#c9ccd3"/></svg>
<span id="t48" class="t" style="top:218.2px;font:400 22px/26.4px 'Liberation Mono',monospace;color:#e3e3e3;left:2485px;-webkit-text-stroke-width:0.400px;"><span style="color:#8fb6f7">&lt;body </span><span style="color:#c6d3f2">class</span><span style="color:#8fb6f7">="</span><span style="color:#f3a076">wp-singular page-template page-template-page-template-blank</span></span>
<span id="t49" class="t" style="top:248.2px;font:400 22px/26.4px 'Liberation Mono',monospace;color:#e3e3e3;left:2485px;-webkit-text-stroke-width:0.400px;"><span style="color:#f3a076">page-template-page-template-blank-php page page-id-89 logged-in admin-bar</span></span>
<span id="t50" class="t" style="top:278.2px;font:400 22px/26.4px 'Liberation Mono',monospace;color:#e3e3e3;left:2485px;-webkit-text-stroke-width:0.400px;"><span style="color:#f3a076">wp-theme-Divi et-tb-has-template et_pb_button_helper_class et_cover_backg</span></span>
<span id="t51" class="t" style="top:307.7px;font:400 22px/26.4px 'Liberation Mono',monospace;color:#e3e3e3;left:2485px;-webkit-text-stroke-width:0.400px;"><span style="color:#f3a076">round et_pb_gutter osx et_pb_gutters3 et_pb_pagebuilder_layout et_no_side</span></span>
<span id="t52" class="t" style="top:337.2px;font:400 22px/26.4px 'Liberation Mono',monospace;color:#e3e3e3;left:2485px;-webkit-text-stroke-width:0.400px;"><span style="color:#f3a076">bar et_divi_theme et-db et-fb customize-support et-vb-root-ancestor</span><span style="color:#8fb6f7">"</span></span>
<span id="t53" class="t" style="top:367.2px;font:400 22px/26.4px 'Liberation Mono',monospace;color:#e3e3e3;left:2485px;-webkit-text-stroke-width:0.400px;"><span style="color:#c6d3f2">data-app-breakpoint</span><span style="color:#8fb6f7">="</span><span style="color:#f3a076">desktop</span><span style="color:#8fb6f7">" </span><span style="color:#c6d3f2">data-app-active-view</span><span style="color:#8fb6f7">="</span><span style="color:#f3a076">desktop</span><span style="color:#8fb6f7">"&gt;</span><span style="color:#e3e3e3"> == </span></span>
<span id="t54" class="t" style="top:367.2px;font:400 22px/26.4px 'Liberation Mono',monospace;color:#e3e3e3;left:3343.0px;font-style:italic;">$0</span>
<svg style="left:2493px;top:403.5px" width="9" height="14" viewBox="0 0 9 14"><path d="M0 0v14l9-7z" fill="#bdbfc4"/></svg>
<span id="t55" class="t" style="top:398.7px;font:400 22px/26.4px 'Liberation Mono',monospace;color:#e3e3e3;left:2509px;-webkit-text-stroke-width:0.400px;"><span style="color:#8fb6f7">&lt;script </span><span style="color:#c6d3f2">type</span><span style="color:#8fb6f7">="</span><span style="color:#f3a076">text/javascript</span><span style="color:#8fb6f7">"&gt;</span></span>
<svg style="left:2923.2px;top:402.5px" width="27" height="19" viewBox="0 0 27 19"><rect x="1" y="1" width="25" height="17" rx="8" fill="none" stroke="#8c919d" stroke-width="1.800"/><circle cx="7.500" cy="9.500" r="1.900" fill="#e3e3e3"/><circle cx="13.500" cy="9.500" r="1.900" fill="#e3e3e3"/><circle cx="19.500" cy="9.500" r="1.900" fill="#e3e3e3"/></svg>
<span id="t56" class="t" style="top:398.7px;font:400 22px/26.4px 'Liberation Mono',monospace;color:#e3e3e3;left:2955.7px;-webkit-text-stroke-width:0.400px;"><span style="color:#8fb6f7">&lt;/script&gt;</span></span>
<svg style="left:2493px;top:436px" width="9" height="14" viewBox="0 0 9 14"><path d="M0 0v14l9-7z" fill="#bdbfc4"/></svg>
<span id="t57" class="t" style="top:431.2px;font:400 22px/26.4px 'Liberation Mono',monospace;color:#e3e3e3;left:2509px;-webkit-text-stroke-width:0.400px;"><span style="color:#8fb6f7">&lt;div </span><span style="color:#c6d3f2">id</span><span style="color:#8fb6f7">="</span><span style="color:#f3a076">wpadminbar</span><span style="color:#8fb6f7">" </span><span style="color:#c6d3f2">class</span><span style="color:#8fb6f7">="</span><span style="color:#f3a076">nojq nojs</span><span style="color:#8fb6f7">"&gt;</span></span>
<svg style="left:3028.8px;top:435px" width="27" height="19" viewBox="0 0 27 19"><rect x="1" y="1" width="25" height="17" rx="8" fill="none" stroke="#8c919d" stroke-width="1.800"/><circle cx="7.500" cy="9.500" r="1.900" fill="#e3e3e3"/><circle cx="13.500" cy="9.500" r="1.900" fill="#e3e3e3"/><circle cx="19.500" cy="9.500" r="1.900" fill="#e3e3e3"/></svg>
<span id="t58" class="t" style="top:431.2px;font:400 22px/26.4px 'Liberation Mono',monospace;color:#e3e3e3;left:3061.3px;-webkit-text-stroke-width:0.400px;"><span style="color:#8fb6f7">&lt;/div&gt;</span></span>
<svg style="left:2493px;top:469px" width="9" height="14" viewBox="0 0 9 14"><path d="M0 0v14l9-7z" fill="#bdbfc4"/></svg>
<span id="t59" class="t" style="top:464.2px;font:400 22px/26.4px 'Liberation Mono',monospace;color:#e3e3e3;left:2509px;-webkit-text-stroke-width:0.400px;"><span style="color:#8fb6f7">&lt;div </span><span style="color:#c6d3f2">id</span><span style="color:#8fb6f7">="</span><span style="color:#f3a076">page-container</span><span style="color:#8fb6f7">" </span><span style="color:#c6d3f2">class</span><span style="color:#8fb6f7">="</span><span style="color:#f3a076">et-vb-root-ancestor et-vb-iframe-ancest</span></span>
<span id="t60" class="t" style="top:493.2px;font:400 22px/26.4px 'Liberation Mono',monospace;color:#e3e3e3;left:2509px;-webkit-text-stroke-width:0.400px;"><span style="color:#f3a076">or</span><span style="color:#8fb6f7">"&gt;</span></span>
<svg style="left:2566.8px;top:497px" width="27" height="19" viewBox="0 0 27 19"><rect x="1" y="1" width="25" height="17" rx="8" fill="none" stroke="#8c919d" stroke-width="1.800"/><circle cx="7.500" cy="9.500" r="1.900" fill="#e3e3e3"/><circle cx="13.500" cy="9.500" r="1.900" fill="#e3e3e3"/><circle cx="19.500" cy="9.500" r="1.900" fill="#e3e3e3"/></svg>
<span id="t61" class="t" style="top:493.2px;font:400 22px/26.4px 'Liberation Mono',monospace;color:#e3e3e3;left:2599.3px;-webkit-text-stroke-width:0.400px;"><span style="color:#8fb6f7">&lt;/div&gt;</span></span>
<svg style="left:2493px;top:530px" width="9" height="14" viewBox="0 0 9 14"><path d="M0 0v14l9-7z" fill="#bdbfc4"/></svg>
<span id="t62" class="t" style="top:525.2px;font:400 22px/26.4px 'Liberation Mono',monospace;color:#e3e3e3;left:2509px;-webkit-text-stroke-width:0.400px;"><span style="color:#8fb6f7">&lt;script </span><span style="color:#c6d3f2">type</span><span style="color:#8fb6f7">="</span><span style="color:#f3a076">text/html</span><span style="color:#8fb6f7">" </span><span style="color:#c6d3f2">id</span><span style="color:#8fb6f7">="</span><span style="color:#f3a076">tmpl-media-frame</span><span style="color:#8fb6f7">"&gt;</span></span>
<svg style="left:3134.4px;top:529px" width="27" height="19" viewBox="0 0 27 19"><rect x="1" y="1" width="25" height="17" rx="8" fill="none" stroke="#8c919d" stroke-width="1.800"/><circle cx="7.500" cy="9.500" r="1.900" fill="#e3e3e3"/><circle cx="13.500" cy="9.500" r="1.900" fill="#e3e3e3"/><circle cx="19.500" cy="9.500" r="1.900" fill="#e3e3e3"/></svg>
<span id="t63" class="t" style="top:525.2px;font:400 22px/26.4px 'Liberation Mono',monospace;color:#e3e3e3;left:3166.9px;-webkit-text-stroke-width:0.400px;"><span style="color:#8fb6f7">&lt;/script&gt;</span></span>
<svg style="left:2493px;top:562px" width="9" height="14" viewBox="0 0 9 14"><path d="M0 0v14l9-7z" fill="#bdbfc4"/></svg>
<span id="t64" class="t" style="top:557.2px;font:400 22px/26.4px 'Liberation Mono',monospace;color:#e3e3e3;left:2509px;-webkit-text-stroke-width:0.400px;"><span style="color:#8fb6f7">&lt;script </span><span style="color:#c6d3f2">type</span><span style="color:#8fb6f7">="</span><span style="color:#f3a076">text/html</span><span style="color:#8fb6f7">" </span><span style="color:#c6d3f2">id</span><span style="color:#8fb6f7">="</span><span style="color:#f3a076">tmpl-media-modal</span><span style="color:#8fb6f7">"&gt;</span></span>
<svg style="left:3134.4px;top:561px" width="27" height="19" viewBox="0 0 27 19"><rect x="1" y="1" width="25" height="17" rx="8" fill="none" stroke="#8c919d" stroke-width="1.800"/><circle cx="7.500" cy="9.500" r="1.900" fill="#e3e3e3"/><circle cx="13.500" cy="9.500" r="1.900" fill="#e3e3e3"/><circle cx="19.500" cy="9.500" r="1.900" fill="#e3e3e3"/></svg>
<span id="t65" class="t" style="top:557.2px;font:400 22px/26.4px 'Liberation Mono',monospace;color:#e3e3e3;left:3166.9px;-webkit-text-stroke-width:0.400px;"><span style="color:#8fb6f7">&lt;/script&gt;</span></span>
<svg style="left:2493px;top:593.5px" width="9" height="14" viewBox="0 0 9 14"><path d="M0 0v14l9-7z" fill="#bdbfc4"/></svg>
<span id="t66" class="t" style="top:588.7px;font:400 22px/26.4px 'Liberation Mono',monospace;color:#e3e3e3;left:2509px;-webkit-text-stroke-width:0.400px;"><span style="color:#8fb6f7">&lt;script </span><span style="color:#c6d3f2">type</span><span style="color:#8fb6f7">="</span><span style="color:#f3a076">text/html</span><span style="color:#8fb6f7">" </span><span style="color:#c6d3f2">id</span><span style="color:#8fb6f7">="</span><span style="color:#f3a076">tmpl-uploader-window</span><span style="color:#8fb6f7">"&gt;</span></span>
<svg style="left:3187.2px;top:592.5px" width="27" height="19" viewBox="0 0 27 19"><rect x="1" y="1" width="25" height="17" rx="8" fill="none" stroke="#8c919d" stroke-width="1.800"/><circle cx="7.500" cy="9.500" r="1.900" fill="#e3e3e3"/><circle cx="13.500" cy="9.500" r="1.900" fill="#e3e3e3"/><circle cx="19.500" cy="9.500" r="1.900" fill="#e3e3e3"/></svg>
<span id="t67" class="t" style="top:588.7px;font:400 22px/26.4px 'Liberation Mono',monospace;color:#e3e3e3;left:3219.7px;-webkit-text-stroke-width:0.400px;"><span style="color:#8fb6f7">&lt;/script&gt;</span></span>
<svg style="left:2493px;top:625px" width="9" height="14" viewBox="0 0 9 14"><path d="M0 0v14l9-7z" fill="#bdbfc4"/></svg>
<span id="t68" class="t" style="top:620.2px;font:400 22px/26.4px 'Liberation Mono',monospace;color:#e3e3e3;left:2509px;-webkit-text-stroke-width:0.400px;"><span style="color:#8fb6f7">&lt;script </span><span style="color:#c6d3f2">type</span><span style="color:#8fb6f7">="</span><span style="color:#f3a076">text/html</span><span style="color:#8fb6f7">" </span><span style="color:#c6d3f2">id</span><span style="color:#8fb6f7">="</span><span style="color:#f3a076">tmpl-uploader-editor</span><span style="color:#8fb6f7">"&gt;</span></span>
<svg style="left:3187.2px;top:624px" width="27" height="19" viewBox="0 0 27 19"><rect x="1" y="1" width="25" height="17" rx="8" fill="none" stroke="#8c919d" stroke-width="1.800"/><circle cx="7.500" cy="9.500" r="1.900" fill="#e3e3e3"/><circle cx="13.500" cy="9.500" r="1.900" fill="#e3e3e3"/><circle cx="19.500" cy="9.500" r="1.900" fill="#e3e3e3"/></svg>
<span id="t69" class="t" style="top:620.2px;font:400 22px/26.4px 'Liberation Mono',monospace;color:#e3e3e3;left:3219.7px;-webkit-text-stroke-width:0.400px;"><span style="color:#8fb6f7">&lt;/script&gt;</span></span>
<svg style="left:2493px;top:657px" width="9" height="14" viewBox="0 0 9 14"><path d="M0 0v14l9-7z" fill="#bdbfc4"/></svg>
<span id="t70" class="t" style="top:652.2px;font:400 22px/26.4px 'Liberation Mono',monospace;color:#e3e3e3;left:2509px;-webkit-text-stroke-width:0.400px;"><span style="color:#8fb6f7">&lt;script </span><span style="color:#c6d3f2">type</span><span style="color:#8fb6f7">="</span><span style="color:#f3a076">text/html</span><span style="color:#8fb6f7">" </span><span style="color:#c6d3f2">id</span><span style="color:#8fb6f7">="</span><span style="color:#f3a076">tmpl-uploader-inline</span><span style="color:#8fb6f7">"&gt;</span></span>
<svg style="left:3187.2px;top:656px" width="27" height="19" viewBox="0 0 27 19"><rect x="1" y="1" width="25" height="17" rx="8" fill="none" stroke="#8c919d" stroke-width="1.800"/><circle cx="7.500" cy="9.500" r="1.900" fill="#e3e3e3"/><circle cx="13.500" cy="9.500" r="1.900" fill="#e3e3e3"/><circle cx="19.500" cy="9.500" r="1.900" fill="#e3e3e3"/></svg>
<span id="t71" class="t" style="top:652.2px;font:400 22px/26.4px 'Liberation Mono',monospace;color:#e3e3e3;left:3219.7px;-webkit-text-stroke-width:0.400px;"><span style="color:#8fb6f7">&lt;/script&gt;</span></span>
<svg style="left:2493px;top:688px" width="9" height="14" viewBox="0 0 9 14"><path d="M0 0v14l9-7z" fill="#bdbfc4"/></svg>
<span id="t72" class="t" style="top:683.2px;font:400 22px/26.4px 'Liberation Mono',monospace;color:#e3e3e3;left:2509px;-webkit-text-stroke-width:0.400px;"><span style="color:#8fb6f7">&lt;script </span><span style="color:#c6d3f2">type</span><span style="color:#8fb6f7">="</span><span style="color:#f3a076">text/html</span><span style="color:#8fb6f7">" </span><span style="color:#c6d3f2">id</span><span style="color:#8fb6f7">="</span><span style="color:#f3a076">tmpl-media-library-view-switcher</span><span style="color:#8fb6f7">"&gt;</span></span>
<svg style="left:3345.6px;top:687px" width="27" height="19" viewBox="0 0 27 19"><rect x="1" y="1" width="25" height="17" rx="8" fill="none" stroke="#8c919d" stroke-width="1.800"/><circle cx="7.500" cy="9.500" r="1.900" fill="#e3e3e3"/><circle cx="13.500" cy="9.500" r="1.900" fill="#e3e3e3"/><circle cx="19.500" cy="9.500" r="1.900" fill="#e3e3e3"/></svg>
<div style="left:3364px;top:88px;width:60px;height:50px;background:#252525;"></div>
<svg style="left:3372px;top:96px" width="31" height="31" viewBox="0 0 40 34" preserveAspectRatio="none" fill="#d4d4d4"><circle cx="20" cy="4.500" r="4.200"/><path d="M2 10.500l2-1.500c10 4 22 4 32 0l2 1.500c-4 3-8 4.500-12 5v17.500h-4.200V22h-3.600v11H14V15.500c-4-.5-8-2-12-5z"/></svg>
<div style="left:2429px;top:704px;width:1023px;height:47px;background:#3e4559;"></div>
<div style="left:2429px;top:706px;width:45px;height:43px;background:#26282f;border:2px solid #4a5061"></div>
<svg style="left:2446px;top:719px" width="11" height="15" viewBox="0 0 11 15"><path d="M11 0v15L0 7.500z" fill="#e3e3e3"/></svg>
<div style="left:2488px;top:712px;width:66px;height:33px;background:#48557a;border-radius:2px;opacity:.55"></div>
<span id="t73" class="t" style="top:712.3px;font:400 25px/30.0px 'Liberation Sans',sans-serif;color:#b3c9f5;letter-spacing:0.46px;left:2490px;width:917px;overflow:hidden;"><span style="color:#8db4f8">body</span>.wp-singular.page-template.page-template-page-template-blank.page-temp</span>
<div style="left:3407px;top:706px;width:45px;height:43px;background:#26282f;border:2px solid #4a5061"></div>
<svg style="left:3427px;top:719px" width="11" height="15" viewBox="0 0 11 15"><path d="M0 0v15l11-7.500z" fill="#e3e3e3"/></svg>
<div style="left:2429px;top:751px;width:1023px;height:53px;background:#343a4c;"></div>
<div style="left:2429px;top:803px;width:1023px;height:2px;background:#4a5061;"></div>
<div style="left:2429px;top:800px;width:111px;height:5px;background:#a8c7fa;border-radius:3px 3px 0 0"></div>
<span id="t74" class="t" style="top:767.2px;font:400 23px/27.6px 'Liberation Sans',sans-serif;color:#a8c7fa;letter-spacing:1.39px;left:2448px;-webkit-text-stroke:0.800px #a8c7fa;">Styles</span>
<span id="t75" class="t" style="top:767.2px;font:400 23px/27.6px 'Liberation Sans',sans-serif;color:#c9ccd3;letter-spacing:1.73px;left:2560px;-webkit-text-stroke:0.800px #c9ccd3;">Computed</span>
<span id="t76" class="t" style="top:767.2px;font:400 23px/27.6px 'Liberation Sans',sans-serif;color:#c9ccd3;letter-spacing:1.32px;left:2722.5px;-webkit-text-stroke:0.800px #c9ccd3;">Layout</span>
<span id="t77" class="t" style="top:767.2px;font:400 23px/27.6px 'Liberation Sans',sans-serif;color:#c9ccd3;letter-spacing:1.23px;left:2840px;-webkit-text-stroke:0.800px #c9ccd3;">Event Listeners</span>
<span id="t78" class="t" style="top:767.2px;font:400 23px/27.6px 'Liberation Sans',sans-serif;color:#c9ccd3;letter-spacing:1.37px;left:3058px;-webkit-text-stroke:0.800px #c9ccd3;">DOM Breakpoints</span>
<svg style="left:3290px;top:768px" width="24" height="20" viewBox="0 0 24 20" fill="none" stroke="#c9ccd3" stroke-width="2.600"><path d="M2 2l8 8-8 8M13 2l8 8-8 8"/></svg>
<div style="left:2429px;top:805px;width:1023px;height:54px;background:#26272c;"></div>
<div style="left:2439px;top:814px;width:721px;height:38px;background:#373e51;border-radius:19px"></div>
<svg style="left:2459px;top:822px" width="22" height="21" viewBox="0 0 22 21" fill="none" stroke="#c9ccd3" stroke-width="2.600" stroke-linejoin="round"><path d="M2 2h18l-7 9v8.500h-4V11z"/></svg>
<span id="t79" class="t" style="top:818.3px;font:400 24px/28.8px 'Liberation Sans',sans-serif;color:#c9ccd3;letter-spacing:0.44px;left:2495px;">Filter</span>
<span id="t80" class="t" style="top:819.2px;font:400 23px/27.6px 'Liberation Sans',sans-serif;color:#c9ccd3;letter-spacing:-0.37px;left:3171px;-webkit-text-stroke:0.5px #c9ccd3;">:hov</span>
<span id="t81" class="t" style="top:819.2px;font:400 23px/27.6px 'Liberation Sans',sans-serif;color:#c9ccd3;letter-spacing:0.87px;left:3231px;-webkit-text-stroke:0.5px #c9ccd3;">.cls</span>
<svg style="left:3293px;top:819px" width="34" height="32" viewBox="0 0 34 32" stroke="#c9ccd3" stroke-width="2.800" fill="none"><path d="M13 2v24M1 14h24"/><path d="M33 23v8h-8z" fill="#c9ccd3" stroke="none"/></svg>
<svg style="left:3349px;top:818px" width="26" height="32" viewBox="0 0 26 32" fill="none" stroke="#c9ccd3" stroke-width="2.800"><path d="M2 2h21v10H2z"/><path d="M8 2v5M13 2v7M18 2v5" stroke-width="2.200"/><path d="M2 12v5h21v-5"/><path d="M12.500 17v6"/><rect x="10" y="23" width="5" height="7" fill="#c9ccd3" stroke="none"/></svg>
<svg style="left:3402px;top:820px" width="28" height="28" viewBox="0 0 28 28" fill="none" stroke="#c9ccd3" stroke-width="2.800"><rect x="1.500" y="1.500" width="25" height="25" rx="2"/><path d="M17 1.500v25"/><path d="M12 9v10l-5.500-5z" fill="#c9ccd3" stroke="none"/></svg>
<div style="left:2429px;top:858px;width:1023px;height:2px;background:#3b3f4a;"></div>
<span id="t82" class="t" style="top:865.2px;font:400 22px/26.4px 'Liberation Mono',monospace;color:#e3e3e3;left:2436px;-webkit-text-stroke-width:0.400px;"><span style="color:#8f9296">element.style </span><span style="color:#e3e3e3">{</span></span>
<span id="t83" class="t" style="top:895.7px;font:400 22px/26.4px 'Liberation Mono',monospace;color:#e3e3e3;left:2436px;-webkit-text-stroke-width:0.400px;"><span style="color:#e3e3e3">}</span></span>
<div style="left:2429px;top:929.5px;width:1023px;height:2px;background:#43464f;"></div>
<span id="t84" class="t" style="top:936.2px;font:400 22px/26.4px 'Liberation Mono',monospace;color:#e3e3e3;left:2436px;-webkit-text-stroke-width:0.400px;"><span style="color:#e3e3e3">.et-vb-top-window-html body</span><span style="color:#8f9296">, .et-vb-top-window-</span></span>
<span id="t85" class="t" style="top:939.7px;font:400 22px/26.4px 'Liberation Mono',monospace;color:#e3e3e3;right:7px;text-decoration:underline;text-underline-offset:4px;text-decoration-thickness:1.500px;">visual-buil…f29cbbfc4:1</span>
<span id="t86" class="t" style="top:960.7px;font:400 22px/26.4px 'Liberation Mono',monospace;color:#e3e3e3;left:2436px;-webkit-text-stroke-width:0.400px;"><span style="color:#8f9296">html body #main-content </span><span style="color:#e3e3e3">{</span></span>
<span id="t87" class="t" style="top:989.2px;font:400 22px/26.4px 'Liberation Mono',monospace;color:#e3e3e3;left:2472.7px;-webkit-text-stroke-width:0.400px;"><span style="color:#7fc8f8">background</span><span style="color:#e3e3e3">: </span></span>
<svg style="left:2632px;top:994px" width="9" height="14" viewBox="0 0 9 14"><path d="M0 0v14l9-7z" fill="#a0a4ab"/></svg>
<div style="left:2656px;top:992px;width:19px;height:19px;background:#fff;border:1.500px solid #8a8d93"></div>
<span id="t88" class="t" style="top:989.2px;font:400 22px/26.4px 'Liberation Mono',monospace;color:#e3e3e3;left:2682.6px;"><span style="border-bottom:2px dotted #aaa">var</span>(<span style="color:#a8c7fa">--window-background</span>);</span>
<span id="t89" class="t" style="top:1017.2px;font:400 22px/26.4px 'Liberation Mono',monospace;color:#e3e3e3;left:2436px;-webkit-text-stroke-width:0.400px;"><span style="color:#e3e3e3">}</span></span>
<div style="left:2429px;top:1050.5px;width:1023px;height:2px;background:#43464f;"></div>
<span id="t90" class="t" style="top:1056.7px;font:400 22px/26.4px 'Liberation Mono',monospace;color:#e3e3e3;left:2436px;-webkit-text-stroke-width:0.400px;"><span style="color:#e3e3e3">.et-vb-top-window-html body</span><span style="color:#8f9296">, .et-vb-top-window-</span></span>
<span id="t91" class="t" style="top:1060.2px;font:400 22px/26.4px 'Liberation Mono',monospace;color:#e3e3e3;right:7px;text-decoration:underline;text-underline-offset:4px;text-decoration-thickness:1.500px;">visual-buil…4bb2e2899:1</span>
<span id="t92" class="t" style="top:1081.2px;font:400 22px/26.4px 'Liberation Mono',monospace;color:#e3e3e3;left:2436px;-webkit-text-stroke-width:0.400px;"><span style="color:#8f9296">html body #main-content </span><span style="color:#e3e3e3">{</span></span>
<div style="left:2472px;top:1122.5px;width:541px;height:2px;background:#cfd2d8;"></div>
<span id="t93" class="t" style="top:1109.7px;font:400 22px/26.4px 'Liberation Mono',monospace;color:#e3e3e3;left:2472.7px;-webkit-text-stroke-width:0.400px;"><span style="color:#7fc8f8">background</span><span style="color:#e3e3e3">: </span></span>
<svg style="left:2632px;top:1114.5px" width="9" height="14" viewBox="0 0 9 14"><path d="M0 0v14l9-7z" fill="#a0a4ab"/></svg>
<div style="left:2656px;top:1112.5px;width:19px;height:19px;background:#fff;border:1.500px solid #8a8d93"></div>
<span id="t94" class="t" style="top:1109.7px;font:400 22px/26.4px 'Liberation Mono',monospace;color:#e3e3e3;left:2682.6px;"><span style="border-bottom:2px dotted #aaa">var</span>(<span style="color:#a8c7fa">--window-background</span>);</span>
<span id="t95" class="t" style="top:1137.7px;font:400 22px/26.4px 'Liberation Mono',monospace;color:#e3e3e3;left:2436px;-webkit-text-stroke-width:0.400px;"><span style="color:#e3e3e3">}</span></span>
<div style="left:2429px;top:1172px;width:1023px;height:2px;background:#43464f;"></div>
<span id="t96" class="t" style="top:1178.2px;font:400 22px/26.4px 'Liberation Mono',monospace;color:#e3e3e3;left:2436px;-webkit-text-stroke-width:0.400px;"><span style="color:#e3e3e3">body.et_cover_background {</span></span>
<span id="t97" class="t" style="top:1181.7px;font:400 22px/26.4px 'Liberation Mono',monospace;color:#e3e3e3;right:7px;text-decoration:underline;text-underline-offset:4px;text-decoration-thickness:1.500px;">style-stati…beta.9.3:13</span>
<span id="t98" class="t" style="top:1209.7px;font:400 22px/26.4px 'Liberation Mono',monospace;color:#e3e3e3;left:2472.7px;-webkit-text-stroke-width:0.400px;"><span style="color:#7fc8f8">background-size</span><span style="color:#e3e3e3">: cover !important;</span></span>
<span id="t99" class="t" style="top:1237.7px;font:400 22px/26.4px 'Liberation Mono',monospace;color:#e3e3e3;left:2472.7px;-webkit-text-stroke-width:0.400px;"><span style="color:#7fc8f8">background-position</span><span style="color:#e3e3e3">: </span></span>
<svg style="left:2751px;top:1243.5px" width="9" height="14" viewBox="0 0 9 14"><path d="M0 0v14l9-7z" fill="#bdbfc4"/></svg>
<span id="t100" class="t" style="top:1237.7px;font:400 22px/26.4px 'Liberation Mono',monospace;color:#e3e3e3;left:2772.4px;-webkit-text-stroke-width:0.400px;"><span style="color:#e3e3e3">top !important;</span></span>
<span id="t101" class="t" style="top:1265.7px;font:400 22px/26.4px 'Liberation Mono',monospace;color:#e3e3e3;left:2472.7px;-webkit-text-stroke-width:0.400px;"><span style="color:#7fc8f8">background-repeat</span><span style="color:#e3e3e3">: no-repeat !important;</span></span>
<span id="t102" class="t" style="top:1293.2px;font:400 22px/26.4px 'Liberation Mono',monospace;color:#e3e3e3;left:2472.7px;-webkit-text-stroke-width:0.400px;"><span style="color:#7fc8f8">background-attachment</span><span style="color:#e3e3e3">: fixed;</span></span>
<div style="left:2472px;top:1305.5px;width:386px;height:2px;background:#cfd2d8;"></div>
<span id="t103" class="t" style="top:1320.7px;font:400 22px/26.4px 'Liberation Mono',monospace;color:#e3e3e3;left:2436px;-webkit-text-stroke-width:0.400px;"><span style="color:#e3e3e3">}</span></span>
<div style="left:2429px;top:1351px;width:1023px;height:54px;background:#343a4c;"></div>
<div style="left:2429px;top:1350px;width:1023px;height:2px;background:#474d5c;"></div>
<div style="left:2429px;top:1404px;width:1023px;height:2px;background:#474d5c;"></div>
<svg style="left:2455px;top:1365px" width="10" height="28" viewBox="0 0 10 28" fill="#c9ccd3"><circle cx="5" cy="4" r="2.800"/><circle cx="5" cy="13.500" r="2.800"/><circle cx="5" cy="23" r="2.800"/></svg>
<span id="t104" class="t" style="top:1367.7px;font:400 23px/27.6px 'Liberation Sans',sans-serif;color:#c9ccd3;letter-spacing:1.23px;left:2504px;-webkit-text-stroke:0.800px #c9ccd3;">Console</span>
<span id="t105" class="t" style="top:1367.7px;font:400 23px/27.6px 'Liberation Sans',sans-serif;color:#a8c7fa;letter-spacing:1.38px;left:2639px;-webkit-text-stroke:0.800px #a8c7fa;">What's new</span>
<span id="t106" class="t" style="top:1367.7px;font:400 23px/27.6px 'Liberation Sans',sans-serif;color:#c9ccd3;letter-spacing:1.09px;left:2835px;-webkit-text-stroke:0.800px #c9ccd3;">AI assistance</span>
<span id="t107" class="t" style="top:1367.7px;font:400 23px/27.6px 'Liberation Sans',sans-serif;color:#c9ccd3;letter-spacing:0.92px;left:3048.5px;-webkit-text-stroke:0.800px #c9ccd3;">Issues</span>
<svg style="left:2781px;top:1372px" width="17" height="17" viewBox="0 0 17 17" stroke="#c9ccd3" stroke-width="2.400"><path d="M1.500 1.500l14 14M15.500 1.500l-14 14"/></svg>
<div style="left:2618px;top:1401px;width:197px;height:5px;background:#a8c7fa;border-radius:3px 3px 0 0"></div>
<svg style="left:3346px;top:1364px" width="31" height="30" viewBox="0 0 31 30" fill="none" stroke="#c9ccd3" stroke-width="2.800"><rect x="1.500" y="1.500" width="28" height="27" rx="2"/><path d="M18.500 1.500v27"/></svg>
<svg style="left:3405px;top:1368px" width="22" height="22" viewBox="0 0 22 22" stroke="#c9ccd3" stroke-width="2.800"><path d="M2 2l18 18M20 2L2 20"/></svg>
<div style="left:2429px;top:1406px;width:1023px;height:330px;background:#3c3c3c;"></div>
<svg style="left:2467px;top:1437px" width="66" height="66" viewBox="0 0 66 66" fill="none"><circle cx="33" cy="33" r="32" fill="#3f78e4"/><circle cx="33" cy="33" r="25" stroke="#fff" stroke-width="3.200"/><circle cx="33" cy="33" r="10.500" stroke="#fff" stroke-width="3.200"/><path d="M33 22.500h22.500M23.900 38.250L12.650 18.800M42.100 38.250L30.850 57.800" stroke="#fff" stroke-width="3.200"/></svg>
<span id="t108" class="t" style="top:1451.7px;font:400 32px/38.4px 'Liberation Sans',sans-serif;color:#e6e6e8;letter-spacing:0.46px;left:2553px;-webkit-text-stroke:1px #e6e6e8;">What's new in DevTools 145</span>
<div style="left:2467px;top:1534px;width:286px;height:48px;background:#a8c7fa;border-radius:24px"></div>
<span id="t109" class="t" style="top:1544.3px;font:400 23.5px/28.2px 'Liberation Sans',sans-serif;color:#0a2f6e;letter-spacing:0.95px;left:2610px;transform:translateX(-50%);-webkit-text-stroke:0.600px #0a2f6e;">See all new features</span>
<div style="left:2429px;top:1622px;width:1023px;height:114px;background:#1e1f20;border-radius:46px 46px 0 0"></div>
<div style="left:2467px;top:1661px;width:721px;height:110px;background:#2a2f38;border-radius:26px;overflow:hidden"><svg style="left:0;top:0" width="235" height="110" viewBox="0 0 235 110" fill="none"><rect width="235" height="110" fill="#3d7ae6"/><g stroke="#6b9df0" stroke-width="1"><path d="M40 0v110M80 0v110M120 0v110M160 0v110M200 0v110M0 30h235M0 70h235"/></g><circle cx="55" cy="75" r="62" stroke="#fff" stroke-width="2.500"/><circle cx="55" cy="75" r="43" stroke="#fff" stroke-width="2.500"/><circle cx="55" cy="75" r="34" stroke="#fff" stroke-width="2.500"/><path d="M117 0c20 30 25 70 10 110" stroke="#fff" stroke-width="2.500"/><path d="M95 70l18-16 32 8 8 48H90z" fill="#e9eaf0"/></svg></div>
<div style="left:2625px;top:1686px;width:61px;height:32px;background:#d6e3fb;border-radius:8px"></div>
<span id="t110" class="t" style="top:1688.3px;font:400 24px/28.8px 'Liberation Sans',sans-serif;color:#1556c4;letter-spacing:-0.01px;left:2655.5px;transform:translateX(-50%);-webkit-text-stroke:0.5px #1556c4;">new</span>
<span id="t111" class="t" style="top:1688.8px;font:400 24px/28.8px 'Liberation Sans',sans-serif;color:#f1f1f1;letter-spacing:-0.21px;left:2727px;">See past highlights from Chrome 142-144</span>
<div style="left:2870px;top:14px;width:302px;height:327px;background:#ececec;border-radius:14px;box-shadow:0 6px 24px rgba(0,0,0,.45),0 0 2px rgba(0,0,0,.5)"></div>
<span id="t112" class="t" style="top:31.9px;font:400 25.5px/30.6px 'Liberation Sans',sans-serif;color:#17181a;letter-spacing:0.78px;left:2899px;-webkit-text-stroke:0.350px #17181a;">Sources</span>
<span id="t113" class="t" style="top:75.9px;font:400 25.5px/30.6px 'Liberation Sans',sans-serif;color:#17181a;letter-spacing:0.93px;left:2899px;-webkit-text-stroke:0.350px #17181a;">Network</span>
<span id="t114" class="t" style="top:119.9px;font:400 25.5px/30.6px 'Liberation Sans',sans-serif;color:#17181a;letter-spacing:0.82px;left:2899px;-webkit-text-stroke:0.350px #17181a;">Performance</span>
<span id="t115" class="t" style="top:163.9px;font:400 25.5px/30.6px 'Liberation Sans',sans-serif;color:#17181a;letter-spacing:0.82px;left:2899px;-webkit-text-stroke:0.350px #17181a;">Memory</span>
<span id="t116" class="t" style="top:207.9px;font:400 25.5px/30.6px 'Liberation Sans',sans-serif;color:#17181a;letter-spacing:0.84px;left:2899px;-webkit-text-stroke:0.350px #17181a;">Application</span>
<span id="t117" class="t" style="top:251.9px;font:400 25.5px/30.6px 'Liberation Sans',sans-serif;color:#17181a;letter-spacing:0.74px;left:2899px;-webkit-text-stroke:0.350px #17181a;">Privacy and security</span>
<span id="t118" class="t" style="top:295.9px;font:400 25.5px/30.6px 'Liberation Sans',sans-serif;color:#17181a;letter-spacing:0.82px;left:2899px;-webkit-text-stroke:0.350px #17181a;">Lighthouse</span>
<svg style="left:3040px;top:175px" width="150" height="90" viewBox="3040 175 150 90" fill="none" stroke="#e4574f" stroke-width="16" stroke-linecap="round" stroke-linejoin="round"><path d="M3170 219H3062"/><path d="M3082 194l-26 25 26 25"/></svg>
</body></html>
